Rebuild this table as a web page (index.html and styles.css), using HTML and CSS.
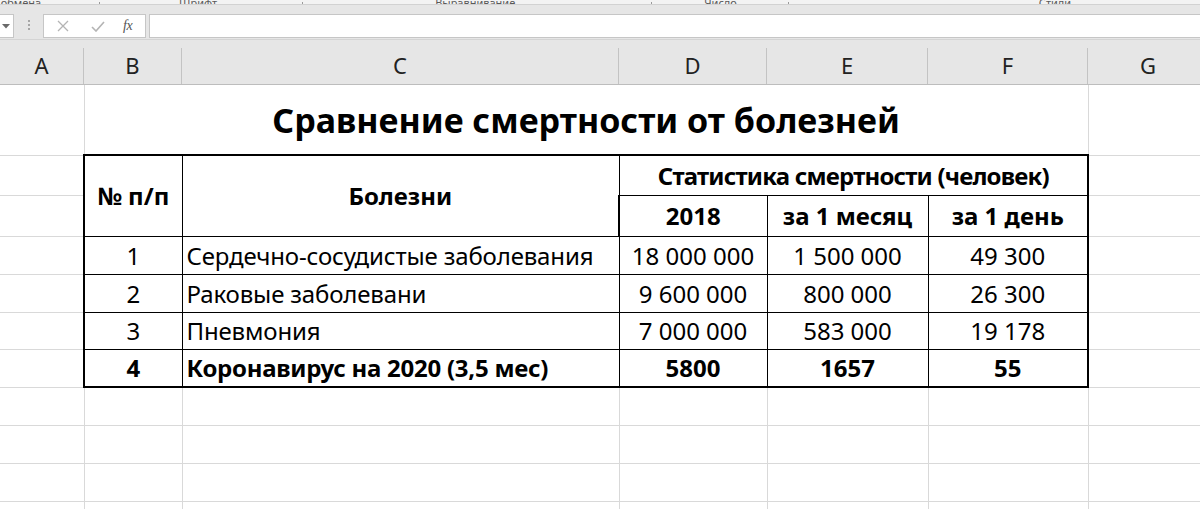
FILE: index.html
```html
<!DOCTYPE html>
<html lang="ru">
<head>
<meta charset="utf-8">
<title>Сравнение смертности от болезней</title>
<link rel="stylesheet" href="styles.css">
</head>
<body>
<div class="app">
  <div class="ribbon-tail">
    <span class="grp g-clip">Буфер обмена</span><span class="launch l1"></span>
    <span class="grp g-font">Шрифт</span><span class="launch l2"></span>
    <span class="grp g-align">Выравнивание</span><span class="launch l3"></span>
    <span class="grp g-num">Число</span><span class="launch l4"></span>
    <span class="grp g-styles">Стили</span>
  </div>
  <div class="fbar">
    <div class="namebox">
      <svg width="8" height="5" viewBox="0 0 8 5"><path d="M0 0 H8 L4 4.5 Z" fill="#6a6a6a"/></svg>
    </div>
    <div class="dots"><i></i><i></i><i></i></div>
    <div class="fbtns">
      <svg class="ic-x" width="12" height="12" viewBox="0 0 12 12"><path d="M1 1 L11 11 M11 1 L1 11" stroke="#b4b4b4" stroke-width="1.3" fill="none"/></svg>
      <svg class="ic-ok" width="14" height="11" viewBox="0 0 14 11"><path d="M1 6 L5 10 L13 1" stroke="#b4b4b4" stroke-width="1.6" fill="none"/></svg>
      <span class="fx">fx</span>
    </div>
    <div class="finput"></div>
  </div>
  <div class="colheads">
    <div class="ch ca">A</div>
    <div class="ch cb">B</div>
    <div class="ch cc">C</div>
    <div class="ch cd">D</div>
    <div class="ch ce">E</div>
    <div class="ch cf">F</div>
    <div class="ch cg">G</div>
  </div>
  <table class="sheet">
    <colgroup>
      <col class="ca"><col class="cb"><col class="cc"><col class="cd"><col class="ce"><col class="cf"><col class="cg">
    </colgroup>
    <tr class="r-title">
      <td class="g"></td>
      <td class="g title" colspan="5">Сравнение смертности от болезней</td>
      <td class="g"></td>
    </tr>
    <tr class="r-h1">
      <td class="g"></td>
      <td class="t th" rowspan="2">№ п/п</td>
      <td class="t th" rowspan="2">Болезни</td>
      <td class="t th stat" colspan="3">Статистика смертности (человек)</td>
      <td class="g"></td>
    </tr>
    <tr class="r-h2">
      <td class="g"></td>
      <td class="t th">2018</td>
      <td class="t th">за 1 месяц</td>
      <td class="t th">за 1 день</td>
      <td class="g"></td>
    </tr>
    <tr class="r-d">
      <td class="g"></td>
      <td class="t num">1</td>
      <td class="t name">Сердечно-сосудистые заболевания</td>
      <td class="t num">18 000 000</td>
      <td class="t num">1 500 000</td>
      <td class="t num">49 300</td>
      <td class="g"></td>
    </tr>
    <tr class="r-d">
      <td class="g"></td>
      <td class="t num">2</td>
      <td class="t name">Раковые заболевани</td>
      <td class="t num">9 600 000</td>
      <td class="t num">800 000</td>
      <td class="t num">26 300</td>
      <td class="g"></td>
    </tr>
    <tr class="r-d3">
      <td class="g"></td>
      <td class="t num">3</td>
      <td class="t name">Пневмония</td>
      <td class="t num">7 000 000</td>
      <td class="t num">583 000</td>
      <td class="t num">19 178</td>
      <td class="g"></td>
    </tr>
    <tr class="r-d bold">
      <td class="g"></td>
      <td class="t num">4</td>
      <td class="t name">Коронавирус на 2020 (3,5 мес)</td>
      <td class="t num">5800</td>
      <td class="t num">1657</td>
      <td class="t num">55</td>
      <td class="g"></td>
    </tr>
    <tr class="r-e"><td class="g"></td><td class="g"></td><td class="g"></td><td class="g"></td><td class="g"></td><td class="g"></td><td class="g"></td></tr>
    <tr class="r-e"><td class="g"></td><td class="g"></td><td class="g"></td><td class="g"></td><td class="g"></td><td class="g"></td><td class="g"></td></tr>
    <tr class="r-e"><td class="g"></td><td class="g"></td><td class="g"></td><td class="g"></td><td class="g"></td><td class="g"></td><td class="g"></td></tr>
    <tr class="r-e"><td class="g"></td><td class="g"></td><td class="g"></td><td class="g"></td><td class="g"></td><td class="g"></td><td class="g"></td></tr>
  </table>
</div>
</body>
</html>
```

FILE: styles.css
```css
html, body {
  margin: 0;
  padding: 0;
  background: #ffffff;
  overflow: hidden;
}

.app {
  width: 1200px;
  height: 509px;
  overflow: hidden;
  font-family: "Noto Sans", "Open Sans", sans-serif;
  color: #000;
}

/* ribbon bottom (group labels cut off by the window edge) */
.ribbon-tail {
  height: 4px;
  background: #f3f3f3;
  border-bottom: 1px solid #d2d2d2;
  overflow: hidden;
  display: flex;
  align-items: flex-end;
  font-size: 11px;
  color: #5a5a5a;
  white-space: nowrap;
}
.grp {
  line-height: 11px;
  margin-bottom: -4px;
}
.g-clip { margin-left: -35px; }
.launch {
  width: 7px;
  height: 2px;
  border-right: 1px solid #9a9a9a;
}
.l1 { margin-left: 51px; }
.g-font { margin-left: 79px; }
.l2 { margin-left: 78px; }
.g-align { margin-left: 132px; }
.l3 { margin-left: 129px; }
.g-num { margin-left: 52px; }
.l4 { margin-left: 44px; }
.g-styles { margin-left: 250px; }

/* formula bar */
.fbar {
  height: 34px;
  background: #e6e6e6;
  display: flex;
  align-items: flex-start;
  padding-top: 9px;
  box-sizing: border-box;
}
.namebox {
  width: 14px;
  height: 24px;
  box-sizing: border-box;
  background: #fff;
  border: 1px solid #c6c6c6;
  border-left: none;
  display: flex;
  align-items: center;
  justify-content: center;
  padding-top: 1px;
}
.namebox svg { margin-left: -2px; }
.dots {
  width: 3px;
  margin-left: 14px;
  margin-top: 6px;
  display: flex;
  flex-direction: column;
  gap: 2px;
}
.dots i {
  width: 2px;
  height: 2px;
  background: #a6a6a6;
}
.fbtns {
  margin-left: 12px;
  width: 103px;
  height: 24px;
  box-sizing: border-box;
  background: #fff;
  border: 1px solid #c6c6c6;
  display: flex;
  align-items: center;
}
.ic-x { margin-left: 13px; }
.ic-ok { margin-left: 22px; }
.fx {
  margin-left: 18px;
  font-family: "Liberation Serif", serif;
  font-style: italic;
  font-size: 14px;
  color: #555;
  letter-spacing: -0.5px;
}
.finput {
  margin-left: 3px;
  flex: 1;
  height: 24px;
  box-sizing: border-box;
  background: #fff;
  border: 1px solid #c6c6c6;
  border-right: none;
}

/* column headers */
.colheads {
  height: 46px;
  box-sizing: border-box;
  background: #e6e6e6;
  border-bottom: 1px solid #bdbdbd;
  border-top: 1px solid #d4d4d4;
  display: flex;
  align-items: flex-end;
}
.ch {
  flex: none;
  height: 36px;
  box-sizing: border-box;
  border-right: 1px solid #c3c3c3;
  font-size: 22px;
  line-height: 34px;
  text-align: center;
  color: #222;
}
.ch.ca { width: 84px; }
.ch.cb { width: 98px; }
.ch.cc { width: 437px; }
.ch.cd { width: 148px; }
.ch.ce { width: 161px; }
.ch.cf { width: 160px; }
.ch.cg { width: 120px; border-right: none; }

/* grid */
.sheet {
  border-collapse: collapse;
  table-layout: fixed;
  width: 1208px;
  font-size: 24px;
}
col.ca { width: 84px; }
col.cb { width: 98px; }
col.cc { width: 437px; }
col.cd { width: 148px; }
col.ce { width: 161px; }
col.cf { width: 160px; }
col.cg { width: 120px; }

.sheet td {
  padding: 0 5px;
  white-space: nowrap;
  overflow: hidden;
}
.sheet td.g {
  border-right: 1px solid #d9d9d9;
  border-bottom: 1px solid #d9d9d9;
}
.sheet td.t {
  border: 1px solid #000;
}

.r-title { height: 70px; }
.r-h1 { height: 40px; }
.r-h2 { height: 41px; }
.r-d { height: 38px; }
.r-d3 { height: 37px; }
.r-e { height: 38px; }

.title {
  text-align: center;
  font-weight: 700;
  font-size: 34px;
  padding-top: 4px;
}
.th {
  text-align: center;
  font-weight: 700;
}
.th.stat { letter-spacing: -0.8px; }
.num { text-align: center; }
.name { text-align: left; letter-spacing: -0.15px; }
.sheet td.name { padding-left: 4px; }
.bold td { font-weight: 700; }
.bold td.name { letter-spacing: -0.25px; }

/* thicker outer frame of the table */
.r-h1 td.t { border-top-width: 2px; }
.bold td.t { border-bottom-width: 2px; }
tr td:nth-child(2).t { border-left-width: 2px; }
.r-h1 td:nth-child(4),
.r-h2 td:nth-child(4),
tr td:nth-child(6).t { border-right-width: 2px; }
```
